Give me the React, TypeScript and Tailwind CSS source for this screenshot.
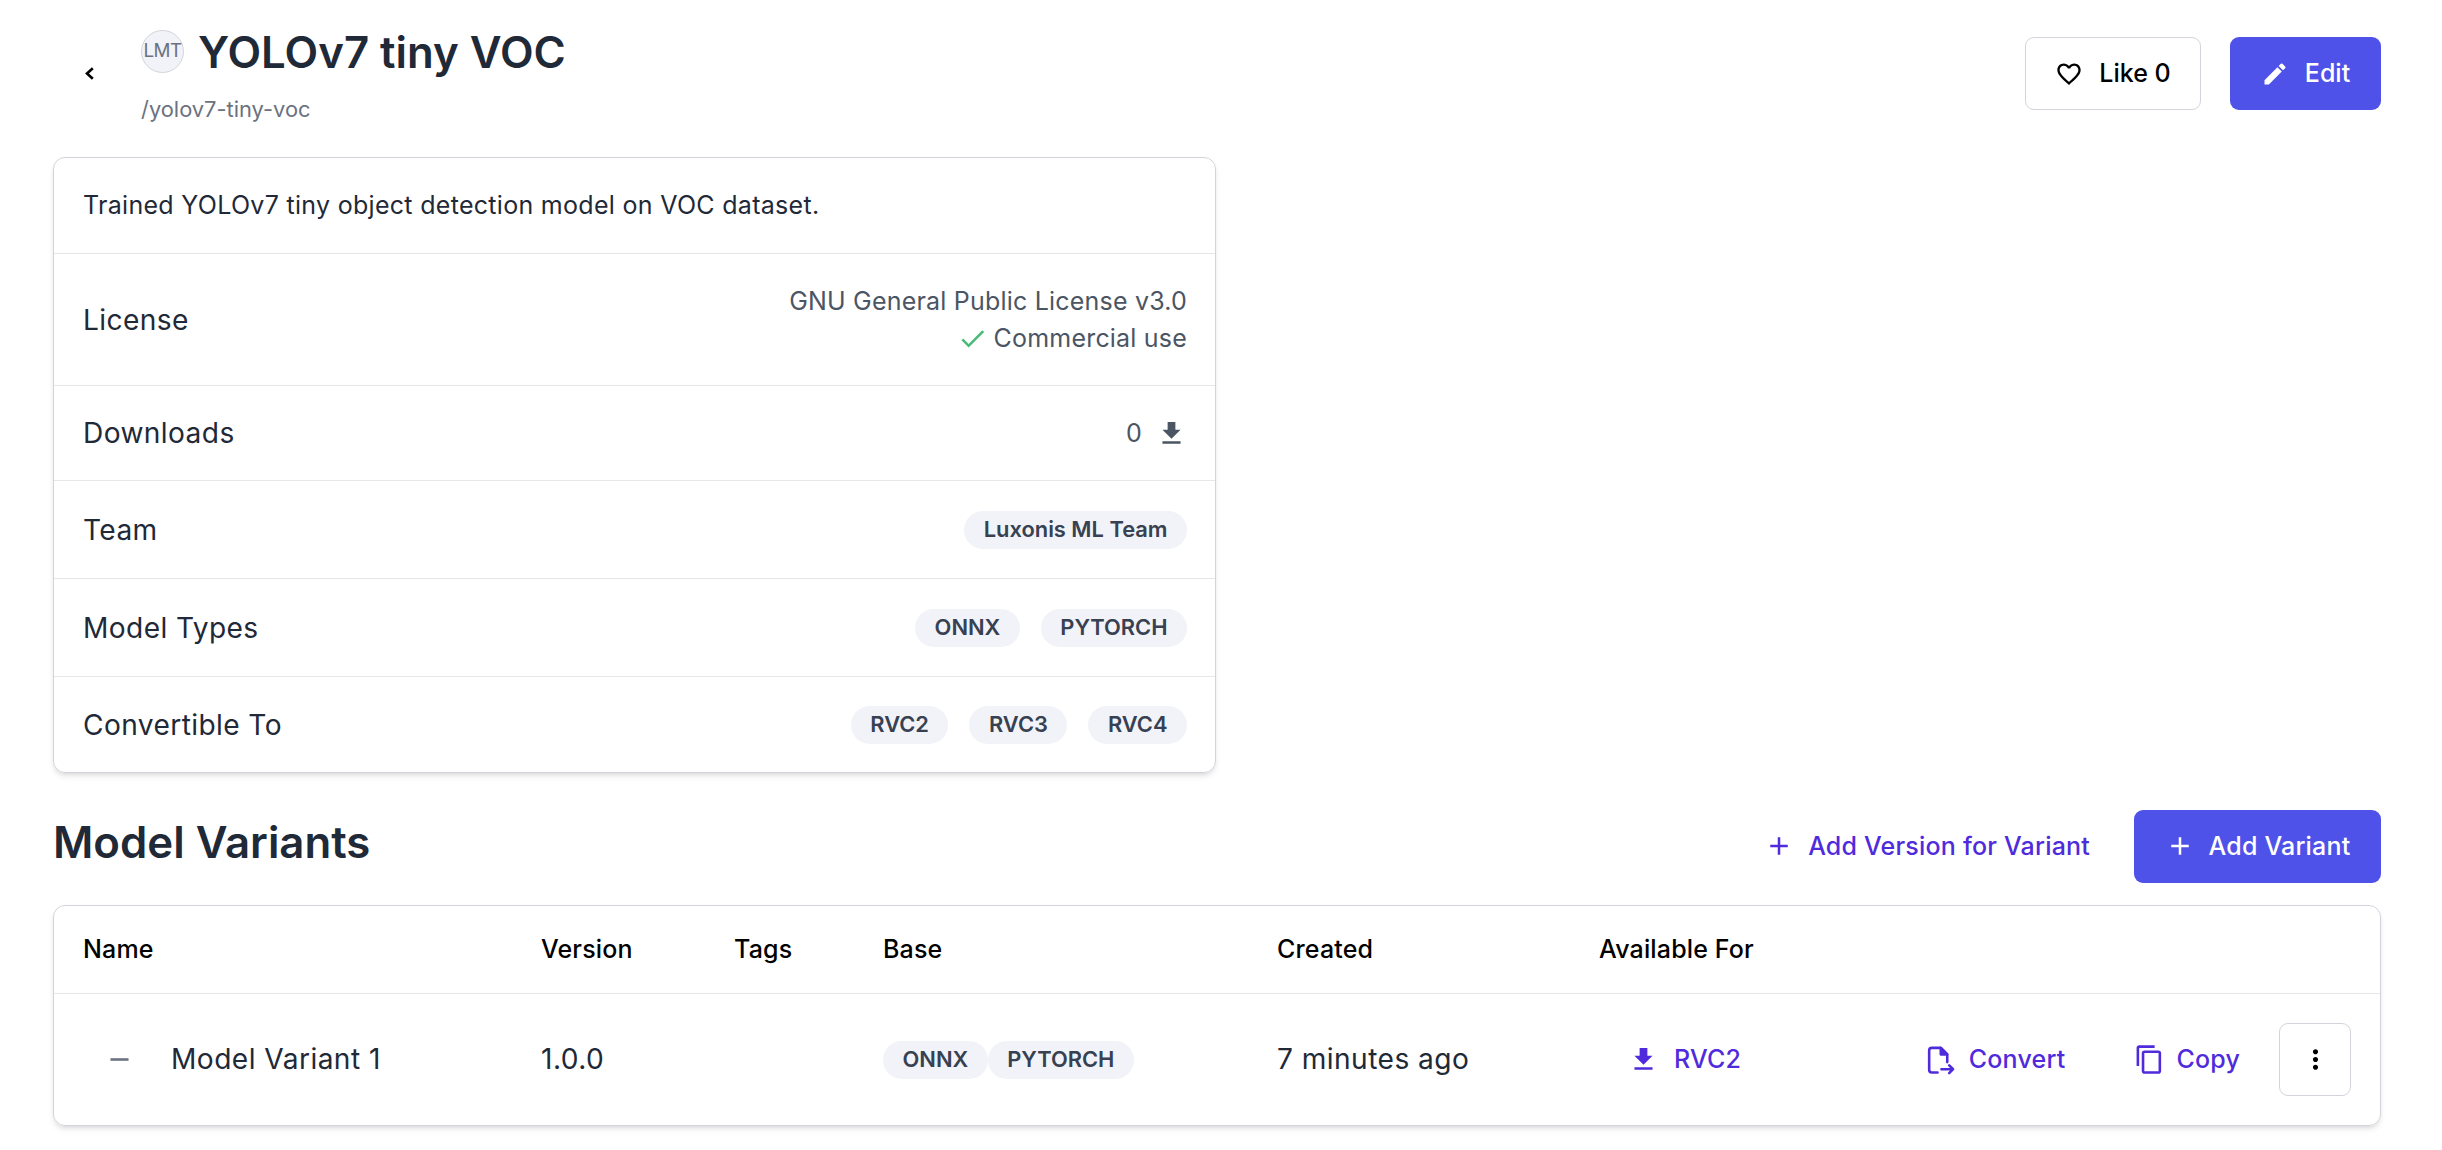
import { MdAdd, MdCheck, MdContentCopy, MdEdit, MdFavoriteBorder, MdFileDownload, MdMoreVert, MdRemove } from "react-icons/md";

function Chip({ label }: { label: string }) {
    return (
        <span className="inline-flex h-[38px] items-center rounded-full bg-[#f1f3f8] px-[19.5px] text-[21.875px] font-semibold tracking-normal text-[#374151]">
            {label}
        </span>
    );
}

function InfoRow({ label, height, children }: { label: string; height: string; children: React.ReactNode }) {
    return (
        <div className={`flex items-center justify-between border-t border-[#e5e7eb] pt-[1px] pr-[28px] pl-[29px] ${height}`}>
            <span className="text-[28.125px] tracking-[0.4px] text-[#1f2937]">{label}</span>
            <div className="flex items-center gap-[21px] text-[25px] tracking-[0.2px] text-[#4b5563]">{children}</div>
        </div>
    );
}

function BackIcon() {
    return (
        <svg viewBox="0 0 27 27" className="h-[27px] w-[27px]" fill="none" stroke="currentColor" strokeWidth="2.6">
            <path d="M16.8 8.2 11 13.5l5.8 5.3" />
        </svg>
    );
}

function ConvertIcon() {
    return (
        <svg viewBox="0 0 24 24" className="h-[31px] w-[31px]" fill="none" stroke="currentColor" strokeWidth="2" strokeLinecap="round" strokeLinejoin="round">
            <path d="M10.5 22H6a2 2 0 0 1-2-2V5a2 2 0 0 1 2-2h7l5 5v6" />
            <path d="M13 3v5h5z" fill="currentColor" />
            <path d="M13.5 19.5h9M19.5 16.5l3 3-3 3" />
        </svg>
    );
}

export default function App() {
    return (
        <div className="min-h-screen bg-white pt-[30px] pr-[61px] pl-[53px] font-['Inter',sans-serif] text-[#1f2937]">
            {/* Header */}
            <header className="flex items-start justify-between">
                <div className="flex items-start">
                    <button className="mt-[30px] ml-[23px] flex w-[65px] items-center text-black">
                        <BackIcon />
                    </button>
                    <div>
                        <div className="flex items-center gap-[14px]">
                            <div className="flex h-[43px] w-[43px] items-center justify-center rounded-full border border-[#d1d5db] bg-[#f1f3f8] text-[18.75px] tracking-[-0.5px] text-[#6b7280]">
                                LMT
                            </div>
                            <h1 className="h-[43px] text-[43.75px] leading-[45px] font-semibold">YOLOv7 tiny VOC</h1>
                        </div>
                        <p className="mt-[20px] text-[21.875px] text-[#6b7280]">/yolov7-tiny-voc</p>
                    </div>
                </div>
                <div className="mt-[7px] flex gap-[29px]">
                    <button className="flex h-[73px] w-[176px] items-center justify-center gap-[16px] rounded-[9px] border border-[#d1d5db] text-[25px] font-medium text-black">
                        <MdFavoriteBorder size={28} />
                        Like 0
                    </button>
                    <button className="flex h-[73px] w-[151px] items-center justify-center gap-[16px] rounded-[9px] bg-[#4f52e9] text-[25px] font-medium text-white">
                        <MdEdit size={28} />
                        Edit
                    </button>
                </div>
            </header>

            {/* Info card */}
            <section className="mt-[31px] w-[1163px] rounded-[12px] border border-[#d1d5db] shadow-md">
                <div className="flex h-[95px] items-center px-[29px] pt-[1px] text-[25px] tracking-[0.3px]">
                    Trained YOLOv7 tiny object detection model on VOC dataset.
                </div>
                <InfoRow label="License" height="h-[132px]">
                    <div className="flex flex-col items-end gap-[3px] leading-[34px]">
                        <span>GNU General Public License v3.0</span>
                        <span className="flex items-center gap-[6px]">
                            <MdCheck size={31} className="text-[#48bb78]" />
                            Commercial use
                        </span>
                    </div>
                </InfoRow>
                <InfoRow label="Downloads" height="h-[95px]">
                    <div className="flex items-center gap-[14px]">
                        <span>0</span>
                        <MdFileDownload size={31} />
                    </div>
                </InfoRow>
                <InfoRow label="Team" height="h-[98px]">
                    <Chip label="Luxonis ML Team" />
                </InfoRow>
                <InfoRow label="Model Types" height="h-[98px]">
                    <Chip label="ONNX" />
                    <Chip label="PYTORCH" />
                </InfoRow>
                <InfoRow label="Convertible To" height="h-[96px]">
                    <Chip label="RVC2" />
                    <Chip label="RVC3" />
                    <Chip label="RVC4" />
                </InfoRow>
            </section>

            {/* Model variants */}
            <div className="mt-[37px] flex items-center justify-between">
                <h2 className="pb-[7px] text-[43.75px] font-semibold">Model Variants</h2>
                <div className="flex items-center gap-[44px]">
                    <button className="flex items-center gap-[14px] text-[25px] font-medium tracking-[0.2px] text-[#4f2bdc]">
                        <MdAdd size={30} />
                        Add Version for Variant
                    </button>
                    <button className="flex h-[73px] w-[247px] items-center justify-center gap-[14px] rounded-[9px] bg-[#4f52e9] text-[25px] font-medium tracking-[0.2px] text-white">
                        <MdAdd size={30} />
                        Add Variant
                    </button>
                </div>
            </div>

            <div className="mt-[22px] rounded-[12px] border border-[#d1d5db] shadow-md">
                <table className="w-full table-fixed border-collapse">
                    <colgroup>
                        <col className="w-[487px]" />
                        <col className="w-[193px]" />
                        <col className="w-[149px]" />
                        <col className="w-[394px]" />
                        <col className="w-[322px]" />
                        <col />
                    </colgroup>
                    <thead>
                        <tr className="h-[88px] border-b border-[#e5e7eb] text-left text-[25px] font-medium tracking-[0.15px] text-black">
                            <th className="pl-[29px] font-medium">Name</th>
                            <th className="font-medium">Version</th>
                            <th className="font-medium">Tags</th>
                            <th className="font-medium">Base</th>
                            <th className="font-medium">Created</th>
                            <th className="font-medium">Available For</th>
                        </tr>
                    </thead>
                    <tbody>
                        <tr className="h-[131px] text-[28.125px] tracking-[0.45px]">
                            <td className="pl-[50px]">
                                <div className="flex items-center gap-[36px]">
                                    <MdRemove size={31} className="text-[#6b7280]" />
                                    Model Variant 1
                                </div>
                            </td>
                            <td>1.0.0</td>
                            <td />
                            <td>
                                <div className="flex">
                                    <Chip label="ONNX" />
                                    <Chip label="PYTORCH" />
                                </div>
                            </td>
                            <td>7 minutes ago</td>
                            <td>
                                <div className="flex items-center justify-between pr-[29px] text-[25px] font-medium tracking-[0.2px] text-[#4f2bdc]">
                                    <button className="ml-[29px] flex items-center gap-[15px]">
                                        <MdFileDownload size={31} />
                                        RVC2
                                    </button>
                                    <div className="flex items-center gap-[39px]">
                                        <button className="flex items-center gap-[14px]">
                                            <ConvertIcon />
                                            Convert
                                        </button>
                                        <button className="ml-[30px] flex items-center gap-[11px]">
                                            <MdContentCopy size={31} />
                                            Copy
                                        </button>
                                        <button className="flex h-[73px] w-[72px] items-center justify-center rounded-[9px] border border-[#d1d5db] text-black">
                                            <MdMoreVert size={31} />
                                        </button>
                                    </div>
                                </div>
                            </td>
                        </tr>
                    </tbody>
                </table>
            </div>
        </div>
    );
}
